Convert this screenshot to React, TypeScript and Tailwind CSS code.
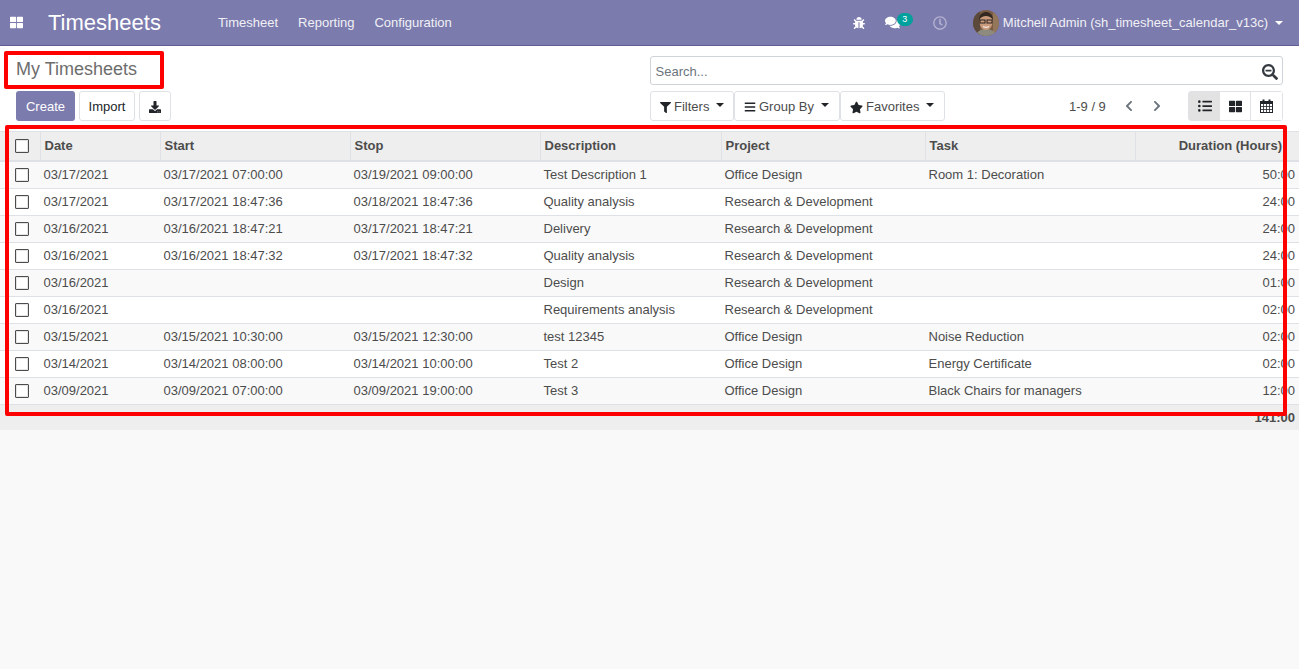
import {
  FaThLarge,
  FaBug,
  FaComments,
  FaRegClock,
  FaDownload,
  FaSearchMinus,
  FaFilter,
  FaBars,
  FaStar,
  FaChevronLeft,
  FaChevronRight,
  FaListUl,
} from "react-icons/fa";

const rows = [
  ["03/17/2021", "03/17/2021 07:00:00", "03/19/2021 09:00:00", "Test Description 1", "Office Design", "Room 1: Decoration", "50:00"],
  ["03/17/2021", "03/17/2021 18:47:36", "03/18/2021 18:47:36", "Quality analysis", "Research & Development", "", "24:00"],
  ["03/16/2021", "03/16/2021 18:47:21", "03/17/2021 18:47:21", "Delivery", "Research & Development", "", "24:00"],
  ["03/16/2021", "03/16/2021 18:47:32", "03/17/2021 18:47:32", "Quality analysis", "Research & Development", "", "24:00"],
  ["03/16/2021", "", "", "Design", "Research & Development", "", "01:00"],
  ["03/16/2021", "", "", "Requirements analysis", "Research & Development", "", "02:00"],
  ["03/15/2021", "03/15/2021 10:30:00", "03/15/2021 12:30:00", "test 12345", "Office Design", "Noise Reduction", "02:00"],
  ["03/14/2021", "03/14/2021 08:00:00", "03/14/2021 10:00:00", "Test 2", "Office Design", "Energy Certificate", "02:00"],
  ["03/09/2021", "03/09/2021 07:00:00", "03/09/2021 19:00:00", "Test 3", "Office Design", "Black Chairs for managers", "12:00"],
];

const columns = [
  { label: "Date", width: 120 },
  { label: "Start", width: 190 },
  { label: "Stop", width: 190 },
  { label: "Description", width: 181 },
  { label: "Project", width: 204 },
  { label: "Task", width: 210 },
];

function Checkbox() {
  return <div className="w-[14px] h-[14px] border border-[#4c4c4c] rounded-[1px] bg-white shadow-[inset_0_0_0_1px_#e4e4e4]" />;
}

function Caret() {
  return <span className="inline-block w-0 h-0 border-x-[4px] border-x-transparent border-t-[4px] border-t-current" />;
}

function Avatar() {
  return (
    <svg width="26" height="26" viewBox="0 0 26 26" className="rounded-full">
      <rect width="26" height="26" fill="#7a5c45" />
      <rect x="0" y="0" width="7" height="26" fill="#5b4a3c" />
      <rect x="20" y="0" width="6" height="26" fill="#94765a" />
      <path d="M3 26c1-5 5-7 10-7s9 2 10 7z" fill="#8d8a80" />
      <ellipse cx="13" cy="12" rx="6.5" ry="8" fill="#c99a7c" />
      <path d="M6 10c0-6 4-8 7-8s7 2 7 8c-2-3-4-4-7-4s-5 1-7 4z" fill="#33281f" />
      <rect x="7" y="10" width="5" height="3" fill="none" stroke="#2b2320" strokeWidth="1" />
      <rect x="14" y="10" width="5" height="3" fill="none" stroke="#2b2320" strokeWidth="1" />
      <path d="M10 16.5c2 1.2 4 1.2 6 0" stroke="#f2e7df" strokeWidth="1.2" fill="none" />
    </svg>
  );
}

function CalendarIcon() {
  return (
    <svg width="13" height="14" viewBox="0 0 13 14" className="text-[#212529]">
      <rect x="0.5" y="2.5" width="12" height="11" fill="none" stroke="currentColor" />
      <rect x="0" y="2" width="13" height="3" fill="currentColor" />
      <rect x="2.5" y="0.5" width="2" height="3" fill="currentColor" />
      <rect x="8.5" y="0.5" width="2" height="3" fill="currentColor" />
      <path d="M3.5 5v8M6.5 5v8M9.5 5v8M1 7.5h11M1 10.5h11" stroke="currentColor" strokeWidth="0.8" fill="none" />
    </svg>
  );
}

function OutlineButton({ children, className = "" }: { children: React.ReactNode; className?: string }) {
  return (
    <button className={`h-[30px] flex items-center bg-white border border-[#dee2e6] rounded-[3px] text-[13px] text-[#212529] ${className}`}>
      {children}
    </button>
  );
}

export default function App() {
  return (
    <div className="relative min-h-[669px] bg-[#f9f9f9] font-['Liberation_Sans',Arial,sans-serif] text-[13px] text-[#4c4c4c] overflow-hidden">
      {/* Top navbar */}
      <nav className="h-[46px] bg-[#7c7bad] border-b border-[#5f5e97] flex items-center text-white">
        <FaThLarge className="ml-[10px] w-[13px] h-[13px]" />
        <span className="ml-[25px] text-[22px] leading-none">Timesheets</span>
        <div className="ml-[57px] flex gap-[20px] text-[13px] text-[#f0f0f6]">
          <span>Timesheet</span>
          <span>Reporting</span>
          <span>Configuration</span>
        </div>
        <div className="ml-auto flex items-center">
          <FaBug className="w-[12px] h-[12px]" />
          <div className="relative ml-[20px] w-[29px] h-[20px] flex items-center">
            <FaComments className="w-[15px] h-[15px]" />
            <span className="absolute left-[12px] top-0 w-[16px] h-[13px] rounded-full bg-[#00a09d] text-[9px] leading-[13px] text-center">3</span>
          </div>
          <FaRegClock className="ml-[19px] w-[14px] h-[14px] text-[#b5b4d1]" />
          <div className="ml-[26px] flex items-center">
            <Avatar />
          </div>
          <span className="ml-[4px] text-[13px] text-[#f0f0f6]">Mitchell Admin (sh_timesheet_calendar_v13c)</span>
          <span className="ml-[7px] mr-[16px] flex"><Caret /></span>
        </div>
      </nav>

      {/* Control panel */}
      <div className="h-[86px] bg-white flex justify-between pl-[16px] pr-[16px] border-b border-[#dee2e6]">
        <div className="flex flex-col">
          <h1 className="h-[45px] pt-[11px] text-[18px] leading-[24px] text-[#6d6d6d]">My Timesheets</h1>
          <div className="flex gap-[4px]">
            <button className="h-[30px] w-[59px] pt-[2px] bg-[#7c7bad] rounded-[3px] text-white text-[13px]">Create</button>
            <OutlineButton className="w-[56px] pt-[2px] justify-center">Import</OutlineButton>
            <OutlineButton className="w-[32px] pt-[2px] justify-center"><FaDownload className="w-[12px] h-[12px]" /></OutlineButton>
          </div>
        </div>
        <div className="w-[633px] flex flex-col pt-[10px]">
          <div className="h-[29px] border border-[#ced4da] rounded-[3px] flex items-center justify-between pt-[2px] pl-[4.5px] pr-[4px]">
            <span className="text-[13px] text-[#6c757d]">Search...</span>
            <FaSearchMinus className="w-[16px] h-[16px] text-[#343a40]" />
          </div>
          <div className="mt-[6px] flex items-center">
            <OutlineButton className="w-[84px] pl-[9px] pt-[2px] gap-[3px] text-[#4c4c4c]">
              <FaFilter className="w-[11px] h-[11px] text-[#212529]" />
              <span className="text-[#4c4c4c]">Filters</span>
              <span className="ml-[4px] -mt-[4px] flex"><Caret /></span>
            </OutlineButton>
            <OutlineButton className="w-[106px] pl-[9px] pt-[2px] gap-[3px] text-[#4c4c4c]">
              <FaBars className="w-[12px] h-[12px] text-[#212529]" />
              <span className="text-[#4c4c4c]">Group By</span>
              <span className="ml-[4px] -mt-[4px] flex"><Caret /></span>
            </OutlineButton>
            <OutlineButton className="w-[105px] pl-[9px] pt-[2px] gap-[3px] text-[#4c4c4c]">
              <FaStar className="w-[13px] h-[13px] text-[#212529]" />
              <span className="text-[#4c4c4c]">Favorites</span>
              <span className="ml-[4px] -mt-[4px] flex"><Caret /></span>
            </OutlineButton>
            <span className="ml-[124px] pt-[2px] text-[13px] text-[#4c4c4c]">1-9 / 9</span>
            <FaChevronLeft className="ml-[18px] w-[10px] h-[12px] text-[#6c757d]" />
            <FaChevronRight className="ml-[18px] w-[10px] h-[12px] text-[#6c757d]" />
            <div className="ml-auto flex h-[30px] border border-[#dee2e6] rounded-[3px]">
              <div className="w-[31px] bg-[#e2e2e2] flex items-center justify-center">
                <FaListUl className="w-[14px] h-[14px] text-[#212529]" />
              </div>
              <div className="w-[31px] border-r border-[#dee2e6] bg-white flex items-center justify-center">
                <FaThLarge className="w-[13px] h-[13px] text-[#212529]" />
              </div>
              <div className="w-[31px] bg-white flex items-center justify-center">
                <CalendarIcon />
              </div>
            </div>
          </div>
        </div>
      </div>

      {/* List view */}
      <table className="w-[1299px] table-fixed border-collapse text-[13px]">
        <colgroup>
          <col className="w-[40px]" />
          {columns.map((c) => (
            <col key={c.label} style={{ width: c.width }} />
          ))}
          <col />
        </colgroup>
        <thead>
          <tr className="h-[29px] bg-[#eeeeee] border-b-2 border-[#dee2e6]">
            <th className="border-r border-[#dee2e6]">
              <div className="flex justify-center pl-[4px]"><Checkbox /></div>
            </th>
            {columns.map((c) => (
              <th key={c.label} className="pl-[4px] text-left font-bold text-[#4c4c4c] border-r border-[#dee2e6]">{c.label}</th>
            ))}
            <th className="pr-[17px] text-right font-bold text-[#4c4c4c]">Duration (Hours)</th>
          </tr>
        </thead>
        <tbody>
          {rows.map((r, i) => (
            <tr key={i} className={`h-[27px] border-b border-[#dee2e6] ${i % 2 === 0 ? "bg-[#f9f9f9]" : "bg-white"}`}>
              <td>
                <div className="flex justify-center pl-[4px]"><Checkbox /></div>
              </td>
              {r.slice(0, 6).map((v, j) => (
                <td key={j} className="pl-[3.5px] text-[#4c4c4c]">{v}</td>
              ))}
              <td className="pr-[4px] text-right text-[#4c4c4c]">{r[6]}</td>
            </tr>
          ))}
        </tbody>
        <tfoot>
          <tr className="h-[26px] bg-[#eeeeee]">
            <td colSpan={7} />
            <td className="pr-[4px] pt-[1px] text-right font-bold text-[#4c4c4c]">141:00</td>
          </tr>
        </tfoot>
      </table>

      {/* Red annotation boxes */}
      <div className="absolute left-[4px] top-[51px] w-[160px] h-[38px] border-[4px] border-[#ff0000] rounded-[2px] pointer-events-none" />
      <div className="absolute left-[5px] top-[125px] w-[1282px] h-[291px] border-[4px] border-[#ff0000] rounded-[2px] pointer-events-none" />
    </div>
  );
}
